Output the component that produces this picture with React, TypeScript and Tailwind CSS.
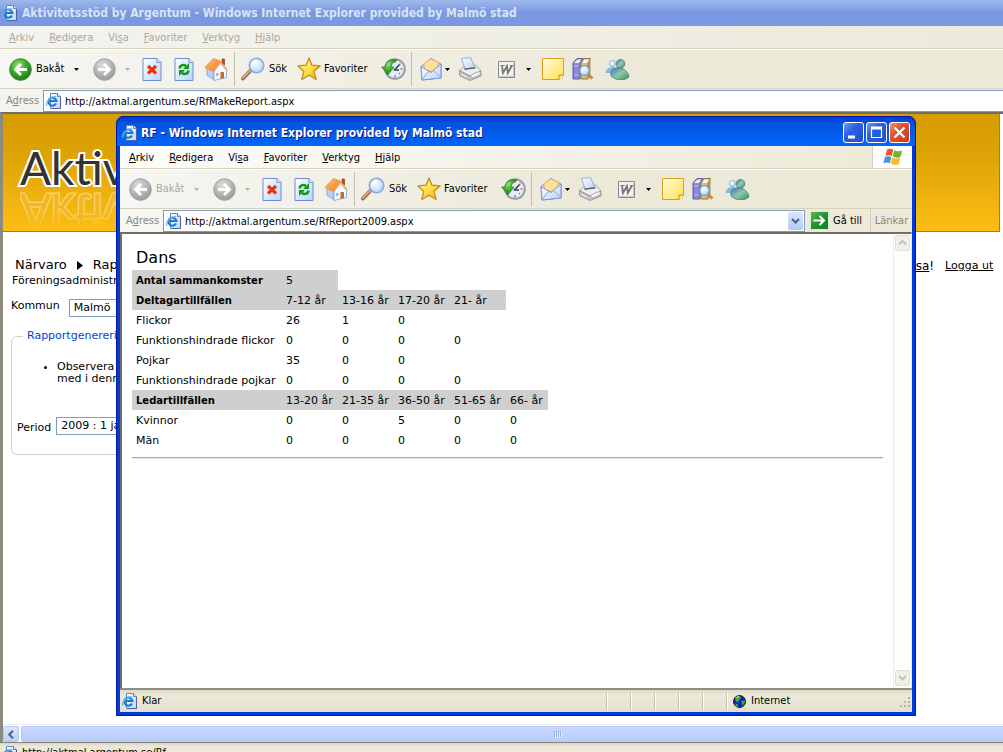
import type { ReactNode } from "react";

type Menu = { before: string; key: string; after: string };

const MENUS: Menu[] = [
	{ before: "", key: "A", after: "rkiv" },
	{ before: "", key: "R", after: "edigera" },
	{ before: "Vi", key: "s", after: "a" },
	{ before: "", key: "F", after: "avoriter" },
	{ before: "", key: "V", after: "erktyg" },
	{ before: "", key: "H", after: "jälp" },
];

type Row = { label: string; cells: string[]; header?: boolean };

const ROWS: Row[] = [
	{ label: "Antal sammankomster", cells: ["5"], header: true },
	{
		label: "Deltagartillfällen",
		cells: ["7-12 år", "13-16 år", "17-20 år", "21- år"],
		header: true,
	},
	{ label: "Flickor", cells: ["26", "1", "0"] },
	{ label: "Funktionshindrade flickor", cells: ["0", "0", "0", "0"] },
	{ label: "Pojkar", cells: ["35", "0", "0"] },
	{ label: "Funktionshindrade pojkar", cells: ["0", "0", "0", "0"] },
	{
		label: "Ledartillfällen",
		cells: ["13-20 år", "21-35 år", "36-50 år", "51-65 år", "66- år"],
		header: true,
	},
	{ label: "Kvinnor", cells: ["0", "0", "5", "0", "0"] },
	{ label: "Män", cells: ["0", "0", "0", "0", "0"] },
];

export default function App() {
	return (
		<main className="relative h-screen overflow-hidden bg-white font-['DejaVu_Sans_Condensed','DejaVu_Sans',sans-serif] text-[11px] leading-[14px] text-black">
			<IconDefs />
			<MainWindow />
			<ReportWindow />
		</main>
	);
}

function MainWindow() {
	return (
		<section className="flex h-[calc(100vh+14px)] w-[109%] flex-col bg-[#ece9d8]">
			<header className="flex h-[26px] shrink-0 items-center gap-1 bg-linear-to-b from-[#9db9eb] via-[#7a96df] to-[#7b99e3] pl-[2px] text-[#d8e4f8]">
				<PageIcon />
				<Title>Aktivitetsstöd by Argentum - Windows Internet Explorer provided by Malmö stad</Title>
			</header>
			<div className="flex h-[23px] shrink-0 border-b border-[#d8d2bd] bg-linear-to-r from-[#f3f3f0] to-[#ece9d8] text-[#aca899]">
				<MenuBar />
			</div>
			<Toolbar canGoBack />
			<div className="flex h-[23px] shrink-0 items-center bg-linear-to-r from-[#f3f3f0] to-[#ece9d8]">
				<AddressField id="main-url" url="http://aktmal.argentum.se/RfMakeReport.aspx" />
			</div>
			<div className="flex min-h-0 flex-1 flex-col border-t-2 border-l-3 border-t-[#716f64] border-l-[#8d8a7e] bg-white">
				<PageContent />
				<div className="mt-auto flex h-[18px] shrink-0 gap-[2px] border-t border-[#eeede5] pt-[1px]">
					<button
						aria-label="Bläddra åt vänster"
						className="grid w-[16px] place-items-center rounded-xs border border-[#b4c8f6] bg-linear-to-b from-[#dbe5fd] to-[#bcd0fb] text-[#4d6185]">
						<svg width="8" height="9" viewBox="0 0 8 9" fill="none" stroke="currentColor" strokeWidth="2">
							<path d="M6 .8 2.2 4.5 6 8.2" />
						</svg>
					</button>
					<div className="grid flex-1 place-items-center rounded-xs border border-[#b4c8f6] bg-linear-to-b from-[#c9d8fc] to-[#b9cdfa]">
						<div className="flex gap-[1px]">
							{[0, 1, 2, 3].map(i => (
								<span key={i} className="h-[6px] w-px bg-[#8cb0f8] shadow-[1px_1px_0_#eef4fe]" />
							))}
						</div>
					</div>
				</div>
			</div>
			<footer className="flex h-[24px] shrink-0 items-start gap-1 border-t border-[#8a887c] bg-linear-to-b from-[#d8d5c3] via-[#ece9d8] via-15% to-[#ece9d8] pt-[3px] pl-[2px]">
				<PageIcon />
				<span>http://aktmal.argentum.se/Rf</span>
			</footer>
		</section>
	);
}

function PageContent() {
	return (
		<div className="w-[calc(100%-91px)] font-['DejaVu_Sans',sans-serif]">
			<div className="h-[118px] w-[calc(100%-2px)] overflow-hidden border-r border-b border-[#8a7f60] bg-linear-to-b from-[#d69c00] via-[#dba205] via-30% to-[#fdbd14] pt-[32px] pl-[17px] font-['Lato',sans-serif] text-[46px] leading-[44px]">
				<h1 className="text-[#333] [paint-order:stroke_fill] [-webkit-text-stroke:4px_white]">
					Aktivitetsstöd
				</h1>
				<div
					aria-hidden="true"
					className="-mt-px -scale-y-100 mask-linear-0 mask-linear-from-40% mask-linear-to-100% text-[#f0b83a] opacity-70 [paint-order:stroke_fill] [-webkit-text-stroke:3px_#ffdf85]">
					Aktivitetsstöd
				</div>
			</div>
			<div className="flex items-end justify-between pt-[25px] pr-[9px] pl-[12px]">
				<nav className="flex items-center gap-[10px] text-[13px] leading-[16px]">
					<a href="#narvaro">Närvaro</a>
					<svg width="6" height="9" viewBox="0 0 6 9" aria-hidden="true">
						<path d="M0 0 6 4.500 0 9Z" fill="#000" />
					</svg>
					<a href="#rapporter">Rapporter</a>
				</nav>
				<div className="flex gap-[11px] text-[11px] leading-[14px]">
					<span className="text-[12px]">
						<a href="#profil" className="underline">
							Lisa
						</a>
						!
					</span>
					<a href="#logga-ut" className="underline">
						Logga ut
					</a>
				</div>
			</div>
			<p className="pt-px pl-[9px]">Föreningsadministratör</p>
			<div className="flex gap-[9px] pt-[11px] pl-[8px]">
				<label htmlFor="kommun">Kommun</label>
				<select
					id="kommun"
					className="h-[18px] w-[110px] appearance-none border border-[#7f9db9] bg-white px-[4px] leading-[16px]">
					<option>Malmö</option>
				</select>
			</div>
			<fieldset className="mt-[12px] ml-[8px] h-[126px] w-[600px] rounded-md border border-[#d0d0bf] px-[5px]">
				<legend className="ml-[6px] px-[4px] text-[#0046d5]">Rapportgenerering</legend>
				<ul className="list-disc pt-[18px] pl-[40px] leading-[12px]">
					<li className="w-[200px]">Observera att närvaro inte kommer med i denna rapport</li>
				</ul>
				<div className="flex items-end gap-[5px] pt-[32px]">
					<label htmlFor="period">Period</label>
					<select
						id="period"
						className="h-[18px] w-[140px] appearance-none border border-[#7f9db9] bg-white px-[4px] leading-[16px]">
						<option>2009 : 1 januari</option>
					</select>
				</div>
			</fieldset>
		</div>
	);
}

function ReportWindow() {
	return (
		<section className="absolute top-[116px] left-[116px] flex h-[600px] w-[800px] flex-col rounded-t-lg border-x-4 border-b-4 border-[#0138d8] bg-[#0138d8] outline-1 -outline-offset-1 outline-[#0019a8]">
			<header className="-mx-[3px] flex h-[30px] shrink-0 items-center gap-[3px] rounded-t-[7px] bg-linear-to-b from-[#0831d9] via-[#0453dd] via-25% to-[#0266fc] pt-[3px] pr-[5px] pl-[5px] text-white text-shadow-[1px_1px_0_#0a1883]">
				<PageIcon />
				<Title>RF - Windows Internet Explorer provided by Malmö stad</Title>
				<div className="ml-auto flex gap-[2px]">
					<CaptionButton label="Minimera">
						<path d="M5 15h7" strokeWidth="3" />
					</CaptionButton>
					<CaptionButton label="Maximera">
						<path d="M5 6h11M5.500 5v10.500h10V5" strokeWidth="1.200" />
						<path d="M5 6h11" strokeWidth="3" />
					</CaptionButton>
					<CaptionButton label="Stäng" close>
						<path d="m5.500 5.500 10 10m0-10-10 10" strokeWidth="2.300" />
					</CaptionButton>
				</div>
			</header>
			<div className="flex h-[23px] shrink-0 justify-between border-b border-[#d8d2bd] bg-linear-to-r from-[#fcfcfa] to-[#ece9d8]">
				<MenuBar />
				<div className="grid w-[40px] place-items-center border-l border-[#d8d2bd] bg-white">
					<WindowsFlag />
				</div>
			</div>
			<Toolbar />
			<div className="flex h-[23px] shrink-0 items-center bg-linear-to-r from-[#f6f6f3] to-[#ece9d8]">
				<AddressField id="report-url" url="http://aktmal.argentum.se/RfReport2009.aspx" dropdown />
				<button className="flex w-[65px] items-center gap-1 pl-[5px]">
					<svg width="19" height="19" viewBox="0 0 19 19" aria-hidden="true">
						<rect x=".5" y=".5" width="18" height="18" rx="1" fill="url(#go)" stroke="#d9efd5" />
						<path d="M3.500 9.500h10M9.500 5l4.500 4.500-4.500 4.500" fill="none" stroke="#fff" strokeWidth="2" />
					</svg>
					Gå till
				</button>
				<button className="h-full w-[42px] border-l border-[#d0cbb5] text-[#8a877a]">Länkar</button>
			</div>
			<div className="flex min-h-0 flex-1 border-t-2 border-r border-l-2 border-[#716f64] border-r-[#ece9d8] bg-white">
				<Report />
				<div className="flex w-[18px] shrink-0 flex-col justify-between border-l border-[#eeede5] bg-[#fdfdfa] pb-[1px]">
					<ScrollArrow label="Bläddra uppåt" d="M1 5.500 4.500 2 8 5.500" />
					<ScrollArrow label="Bläddra nedåt" d="M1 2 4.500 5.500 8 2" />
				</div>
			</div>
			<footer className="flex h-[24px] shrink-0 items-center gap-1 border-t-2 border-t-[#8f8d80] bg-linear-to-b from-[#dedbca] via-[#ece9d8] via-25% to-[#e3e0cf] pl-[2px]">
				<PageIcon />
				<span>Klar</span>
				<div className="ml-auto flex h-[17px]">
					{[0, 1, 2, 3, 4].map(i => (
						<span key={i} className="w-[24px] border-l border-[#c5c2b0] shadow-[inset_1px_0_0_#fff]" />
					))}
				</div>
				<div className="-ml-1 flex h-[17px] w-[186px] items-center gap-[5px] border-l border-[#c5c2b0] pl-[6px] shadow-[inset_1px_0_0_#fff]">
					<GlobeIcon />
					Internet
					<svg className="mt-1 ml-auto" width="12" height="12" viewBox="0 0 12 12" fill="#b8b4a2" aria-hidden="true">
						<path d="M8 0h2v2H8zM4 4h2v2H4zM8 4h2v2H8zM0 8h2v2H0zM4 8h2v2H4zM8 8h2v2H8z" />
					</svg>
				</div>
			</footer>
		</section>
	);
}

function Report() {
	return (
		<article className="flex-1 pt-[13px] pr-[10px] pl-[10px] font-['DejaVu_Sans',sans-serif]">
			<h2 className="pb-[2px] pl-1 text-[16px] leading-[21px]">Dans</h2>
			<table className="w-[416px] table-fixed border-collapse text-left">
				<colgroup>
					<col className="w-[150px]" />
					<col className="w-[56px]" />
					<col className="w-[56px]" />
					<col className="w-[56px]" />
					<col className="w-[56px]" />
					<col className="w-[42px]" />
				</colgroup>
				<tbody>
					{ROWS.map(row => (
						<tr key={row.label} className="h-[20px]">
							<th
								scope="row"
								className={
									"p-0 pt-[2px] pl-1 whitespace-nowrap " +
									(row.header ? "bg-[#cfcfcf] text-[10px] font-bold" : "font-normal")
								}>
								{row.label}
							</th>
							{row.cells.map((cell, i) => (
								<td
									key={i}
									className={
										"p-0 pt-[2px] pl-1 whitespace-nowrap " + (row.header ? "bg-[#cfcfcf]" : "")
									}>
									{cell}
								</td>
							))}
						</tr>
					))}
				</tbody>
			</table>
			<hr className="mt-[7px] border-t border-b border-t-[#aca899] border-b-[#ece9d8]" />
		</article>
	);
}

function Title({ children }: { children: ReactNode }) {
	return (
		<h1 className="font-['DejaVu_Sans_Condensed','DejaVu_Sans',sans-serif] text-[12px] font-bold whitespace-nowrap">
			{children}
		</h1>
	);
}

function MenuBar() {
	return (
		<nav className="flex items-center gap-[15px] pt-px pl-[9px]">
			{MENUS.map(m => (
				<button key={m.key + m.after}>
					{m.before}
					<u>{m.key}</u>
					{m.after}
				</button>
			))}
		</nav>
	);
}

function Toolbar({ canGoBack }: { canGoBack?: boolean }) {
	return (
		<div className="flex h-[40px] shrink-0 items-center border-t border-b border-t-white border-b-[#d8d2bd] bg-linear-to-r from-[#f6f6f3] to-[#ece9d8] to-60%">
			<button
				disabled={!canGoBack}
				className="flex w-[74px] items-center gap-1 pl-[9px] disabled:text-[#aca899]">
				<ArrowCircle active={canGoBack} />
				Bakåt
			</button>
			<Caret muted={!canGoBack} />
			<button disabled aria-label="Framåt" className="mr-[9px] ml-[13px]">
				<ArrowCircle forward />
			</button>
			<Caret muted />
			<div className="ml-[5px] flex">
				<ToolButton label="Stopp">
					<StopIcon />
				</ToolButton>
				<ToolButton label="Uppdatera">
					<RefreshIcon />
				</ToolButton>
				<ToolButton label="Startsida">
					<HomeIcon />
				</ToolButton>
			</div>
			<Separator />
			<button className="flex w-[56px] items-center gap-1 pl-1">
				<SearchIcon />
				Sök
			</button>
			<button className="flex w-[84px] items-center gap-[3px] pl-1">
				<StarIcon />
				Favoriter
			</button>
			<ToolButton label="Tidigare">
				<HistoryIcon />
			</ToolButton>
			<Separator />
			<button aria-label="E-post" className="ml-[6px] w-[25px]">
				<MailIcon />
			</button>
			<Caret />
			<button aria-label="Skriv ut" className="ml-[7px] w-[40px]">
				<PrintIcon />
			</button>
			<button aria-label="Redigera" className="w-[28px]">
				<WordIcon />
			</button>
			<Caret />
			<button aria-label="Diskutera" className="ml-[10px] w-[30px]">
				<NoteIcon />
			</button>
			<button aria-label="Referensmaterial" className="w-[33px]">
				<BooksIcon />
			</button>
			<button aria-label="Messenger" className="w-[28px]">
				<PeopleIcon />
			</button>
		</div>
	);
}

function ToolButton({ label, children }: { label: string; children: ReactNode }) {
	return (
		<button aria-label={label} className="grid w-[32px] shrink-0 place-items-center">
			{children}
		</button>
	);
}

function Separator() {
	return <span className="mx-[2px] h-[34px] w-px bg-[#c5c0a8]" />;
}

function Caret({ muted }: { muted?: boolean }) {
	return (
		<svg
			width="6"
			height="3"
			viewBox="0 0 6 3"
			className="shrink-0"
			fill={muted ? "#b5b2a3" : "#000"}
			aria-hidden="true">
			<path d="M0 0h5L2.500 3Z" />
		</svg>
	);
}

function AddressField({ id, url, dropdown }: { id: string; url: string; dropdown?: boolean }) {
	return (
		<>
			<label htmlFor={id} className="w-[43px] pt-px pl-[6px] text-[#8a877a]">
				A<u>d</u>ress
			</label>
			<div className="flex h-[22px] flex-1 items-center gap-[3px] border border-[#7f9db9] bg-white pl-[2px]">
				<PageIcon />
				<input id={id} defaultValue={url} className="min-w-0 flex-1 pt-[2px] outline-none" />
				{dropdown ?
					<button
						aria-label="Visa adresser"
						className="mr-px grid h-[18px] w-[15px] place-items-center rounded-xs bg-linear-to-b from-[#dbe5fd] to-[#b4c9f8] text-[#4d6185]">
						<svg width="9" height="6" viewBox="0 0 9 6" fill="none" stroke="currentColor" strokeWidth="2">
							<path d="M1 1l3.500 3.500L8 1" />
						</svg>
					</button>
				:	null}
			</div>
		</>
	);
}

function CaptionButton({ label, close, children }: { label: string; close?: boolean; children: ReactNode }) {
	return (
		<button aria-label={label}>
			<svg width="21" height="21" viewBox="0 0 21 21" fill="none" stroke="#fff">
				<rect
					x=".5"
					y=".5"
					width="20"
					height="20"
					rx="2.500"
					fill={close ? "url(#caption-red)" : "url(#caption-blue)"}
				/>
				{children}
			</svg>
		</button>
	);
}

function ScrollArrow({ label, d }: { label: string; d: string }) {
	return (
		<button
			aria-label={label}
			className="m-px grid h-[16px] w-[15px] place-items-center rounded-xs border border-[#e2e0d4] bg-[#f1f0e8] text-[#c5c2b6]">
			<svg width="9" height="8" viewBox="0 0 9 8" fill="none" stroke="currentColor" strokeWidth="2">
				<path d={d} />
			</svg>
		</button>
	);
}

/* Gradients shared by all the toolbar icons */
function IconDefs() {
	return (
		<svg width="0" height="0" className="absolute" aria-hidden="true">
			<defs>
				<radialGradient id="green" cx=".4" cy=".3" r=".7">
					<stop offset="0" stopColor="#9be07c" />
					<stop offset=".5" stopColor="#3fae2c" />
					<stop offset="1" stopColor="#1c7d12" />
				</radialGradient>
				<radialGradient id="grey" cx=".4" cy=".3" r=".7">
					<stop offset="0" stopColor="#dedede" />
					<stop offset=".6" stopColor="#b4b4b4" />
					<stop offset="1" stopColor="#9a9a9a" />
				</radialGradient>
				<linearGradient id="sheet" x1="0" y1="0" x2="1" y2="1">
					<stop offset="0" stopColor="#fff" />
					<stop offset="1" stopColor="#b9d3fa" />
				</linearGradient>
				<linearGradient id="gold" x1="0" y1="0" x2="1" y2="1">
					<stop offset="0" stopColor="#fffbb0" />
					<stop offset=".5" stopColor="#ffe04a" />
					<stop offset="1" stopColor="#f3ab12" />
				</linearGradient>
				<linearGradient id="note" x1="0" y1="0" x2="1" y2="1">
					<stop offset="0" stopColor="#fffde0" />
					<stop offset="1" stopColor="#ffe04e" />
				</linearGradient>
				<linearGradient id="roof" x1="0" y1="0" x2="1" y2="1">
					<stop offset="0" stopColor="#ffc36b" />
					<stop offset="1" stopColor="#ea7a22" />
				</linearGradient>
				<radialGradient id="lens" cx=".4" cy=".35" r=".7">
					<stop offset="0" stopColor="#fff" />
					<stop offset="1" stopColor="#a9d7fb" />
				</radialGradient>
				<linearGradient id="person" x1="0" y1="0" x2="1" y2="1">
					<stop offset="0" stopColor="#3f76b3" />
					<stop offset=".5" stopColor="#8cc7b0" />
					<stop offset="1" stopColor="#3f9440" />
				</linearGradient>
				<linearGradient id="caption-blue" x1="0" y1="0" x2="1" y2="1">
					<stop offset="0" stopColor="#7a9cf5" />
					<stop offset=".4" stopColor="#2a5fe0" />
					<stop offset="1" stopColor="#1c4fd0" />
				</linearGradient>
				<linearGradient id="caption-red" x1="0" y1="0" x2="1" y2="1">
					<stop offset="0" stopColor="#f09a7c" />
					<stop offset=".4" stopColor="#e2532c" />
					<stop offset="1" stopColor="#c43a12" />
				</linearGradient>
				<linearGradient id="go" x1="0" y1="0" x2="1" y2="1">
					<stop offset="0" stopColor="#5fbb5b" />
					<stop offset=".5" stopColor="#1f942b" />
					<stop offset="1" stopColor="#0f7f1c" />
				</linearGradient>
			</defs>
		</svg>
	);
}

function PageIcon() {
	return (
		<svg width="16" height="16" viewBox="0 0 16 16" className="shrink-0" aria-hidden="true">
			<path d="M4.500.5h7l3 3v12h-10z" fill="url(#sheet)" stroke="#6886b8" />
			<path d="M14.500 4v11.500H5" fill="none" stroke="#50609c" />
			<path d="M11.500.5v3h3" fill="#dbe7fb" stroke="#6886b8" />
			<path d="M10 10.600A4 4 0 1 1 10.400 8H3" fill="none" stroke="#1d78cf" strokeWidth="2.200" />
			<path d="M1 12.800C-.8 9.500 4 4 10 3.300" fill="none" stroke="#5db8f0" strokeWidth="1.300" />
		</svg>
	);
}

function ArrowCircle({ active, forward }: { active?: boolean; forward?: boolean }) {
	return (
		<svg width="23" height="23" viewBox="0 0 23 23" className="shrink-0" aria-hidden="true">
			<circle
				cx="11.500"
				cy="11.500"
				r="10.800"
				fill={active ? "url(#green)" : "url(#grey)"}
				stroke={active ? "#3a8a30" : "#a4a4a4"}
			/>
			<path
				d={forward ? "M5 11.500h11M11 6l5.500 5.500L11 17" : "M18 11.500H7M12 6l-5.500 5.500L12 17"}
				fill="none"
				stroke="#fff"
				strokeWidth="2.800"
			/>
		</svg>
	);
}

function StopIcon() {
	return (
		<svg width="20" height="23" viewBox="0 0 20 23" aria-hidden="true">
			<path d="M1 .5h14l4 4v18H1z" fill="url(#sheet)" stroke="#6b8fd0" />
			<path d="M15 .5v4h4" fill="#e4eefd" stroke="#6b8fd0" />
			<path d="m6 8 8 7.500M14 8l-8 7.500" stroke="#e8340c" strokeWidth="3.200" />
		</svg>
	);
}

function RefreshIcon() {
	return (
		<svg width="20" height="23" viewBox="0 0 20 23" aria-hidden="true">
			<path d="M1 .5h14l4 4v18H1z" fill="url(#sheet)" stroke="#6b8fd0" />
			<path d="M15 .5v4h4" fill="#e4eefd" stroke="#6b8fd0" />
			<path d="M5.500 10.500c.5-3.500 4-4.500 6.500-2.500M14.500 12.500c-.5 3.500-4 4.500-6.500 2.500" fill="none" stroke="#129a22" strokeWidth="2.600" />
			<path d="M15 5v6H9zM5 18v-6h6z" fill="#129a22" />
		</svg>
	);
}

function HomeIcon() {
	return (
		<svg width="24" height="24" viewBox="0 0 24 24" aria-hidden="true">
			<path d="M18 2h2.500v6l-2.500-2z" fill="#c2452a" stroke="#94331e" strokeWidth=".6" />
			<path d="M3 11 10 15v8l-7-4.500z" fill="#b9cdf5" stroke="#7792c8" strokeWidth=".7" />
			<path d="m10 14 6.500-8 6 7v7.500L10 23.500z" fill="#f5f9ff" stroke="#7da0d8" strokeWidth=".8" />
			<path d="M9.500 1.500 16.500 4 9.500 14.500.8 10.500z" fill="url(#roof)" stroke="#e59a4d" strokeWidth=".8" />
			<path d="m9.500 14.500 7-9.500 6.500 8" fill="none" stroke="#f0a25a" strokeWidth="1.600" />
			<path d="M16.500 15H20v6.200l-3.500.8z" fill="#b8722e" />
			<path d="M12 16h2.500v3H12z" fill="#8fbcf2" />
		</svg>
	);
}

function SearchIcon() {
	return (
		<svg width="24" height="24" viewBox="0 0 24 24" className="shrink-0" aria-hidden="true">
			<path d="m9.500 13.500-7.500 8" stroke="#9c6a4b" strokeWidth="3.800" strokeLinecap="round" />
			<path d="m9 13.500-7 7.500" stroke="#e3b890" strokeWidth="1.500" strokeLinecap="round" />
			<circle cx="15.500" cy="8.500" r="7.200" fill="url(#lens)" stroke="#8ea9de" strokeWidth="1.600" />
			<path d="M11 8c.5-2.500 2.500-4 5-4" fill="none" stroke="#fff" strokeWidth="1.500" />
		</svg>
	);
}

function StarIcon() {
	return (
		<svg width="24" height="24" viewBox="0 0 25 25" className="shrink-0" aria-hidden="true">
			<path
				d="m12.500 1 3 7.500 8.500.8-6.500 5.600 2.500 8.600-7.500-4.500L5 23.500l2-8.600L1 9.300l8.500-.8z"
				fill="url(#gold)"
				stroke="#c58a14"
				strokeWidth="1.300"
				strokeLinejoin="round"
			/>
		</svg>
	);
}

function HistoryIcon() {
	return (
		<svg width="25" height="24" viewBox="0 0 25 24" aria-hidden="true">
			<circle cx="14" cy="12" r="9.800" fill="#e1eefc" stroke="#9a9da6" strokeWidth="2" />
			<path d="M14 4v2M21.500 12h-2M14 18v2.500M19.500 6.500l-1 1M19 17l-1-1" stroke="#ef5b3a" strokeWidth="1.400" />
			<path d="m13 13.500 5.500-6M13 13h5" stroke="#34445a" strokeWidth="1.600" />
			<path
				d="M16 3C9 1 4.500 5 4 10H.8l6 8 6.200-8H10c.3-3 2.500-5.500 6-7z"
				fill="url(#green)"
				stroke="#26811d"
				strokeWidth=".8"
			/>
		</svg>
	);
}

function MailIcon() {
	return (
		<svg width="22" height="24" viewBox="0 0 22 24" aria-hidden="true">
			<path d="M1 9.500 11 1.500 21 7v14L2 23z" fill="#c7dcfa" stroke="#7c93d8" />
			<path d="m4 6.500 7-4.700 7.500 3.700-1 8.500H4.500z" fill="#ffe09a" stroke="#e5a94a" strokeWidth=".8" />
			<path d="m1 9.500 10 6L21 7v14L2 23z" fill="url(#sheet)" stroke="#7c93d8" />
			<path d="m2 22.500 7-8.500M21 20.500 13.500 13.500" stroke="#8ea6e2" />
		</svg>
	);
}

function PrintIcon() {
	return (
		<svg width="24" height="24" viewBox="0 0 24 24" aria-hidden="true">
			<path d="m1.500 13.500 4.500-4 12-1.500 5 6-11 5z" fill="#ededed" stroke="#9a9a9a" strokeWidth=".8" />
			<path d="m3.500 1.500 9-1 4.500 10-10 1.500z" fill="url(#sheet)" stroke="#77a0dc" strokeWidth=".8" />
			<path d="m1.500 13.500 10 5.500 11.500-5v5L12 23.500l-10.500-5z" fill="#c4c4c4" stroke="#8c8c8c" strokeWidth=".8" />
			<path d="m6.500 12.300 11-1.500" stroke="#666" strokeWidth="1.400" />
			<path d="m12 18.500 9-4 2 2.500-8 4z" fill="#f7f7f7" stroke="#909090" strokeWidth=".6" />
			<path d="m3.500 17.500 5 2.300" stroke="#fff" />
		</svg>
	);
}

function WordIcon() {
	return (
		<svg width="17" height="17" viewBox="0 0 17 17" aria-hidden="true">
			<path d="M.5.500h16v16H.5z" fill="#f3f3f3" stroke="#8a8a8a" />
			<path d="M2 15.500h13.500V2" fill="none" stroke="#c6c6c6" />
			<path d="m4 5 1 7L9 5l.8 7L14 4.500" fill="none" stroke="#777" strokeWidth="1.800" />
			<path d="M2.500 4.500h4M12 4.500h3" stroke="#777" />
		</svg>
	);
}

function NoteIcon() {
	return (
		<svg width="22" height="22" viewBox="0 0 22 22" aria-hidden="true">
			<path d="M.5.500h21V17l-4.500 4.500H.5z" fill="url(#note)" stroke="#dca019" />
			<path d="M17 21.500V17h4.500" fill="#ffedaa" stroke="#c68c10" />
		</svg>
	);
}

function BooksIcon() {
	return (
		<svg width="22" height="22" viewBox="0 0 22 22" aria-hidden="true">
			<path d="m1 5 4-4.500h6L8 5v16H1z" fill="#8b88d8" stroke="#5a57aa" />
			<path d="m2 5 3.500-3.500h4L7 5z" fill="#eeeef8" />
			<path d="M2.500 8h4M2.500 17h4" stroke="#c8c5f2" />
			<path d="m9 5 3-4.500h6.500L16 5v16H9z" fill="#dcc080" stroke="#8c764c" />
			<path d="m10 5 2.500-3.500h4.500L15 5z" fill="#f8f2e0" />
			<path d="M16 5 18.500.5v18L16 21z" fill="#b0935a" />
			<path d="m15.500 16 5 4.500" stroke="#c98a3b" strokeWidth="3" />
			<circle cx="12.500" cy="12.500" r="4.800" fill="url(#lens)" stroke="#6b9cd2" strokeWidth="1.200" />
		</svg>
	);
}

function PeopleIcon() {
	return (
		<svg width="25" height="21" viewBox="0 0 25 21" aria-hidden="true">
			<path d="M.5 14c1-4.500 4-6 8-6 2 1 3 3 3 6z" fill="#7cb7df" />
			<circle cx="7.500" cy="4.500" r="3" fill="url(#lens)" stroke="#6ca2cf" strokeWidth=".7" />
			<path d="M6 17c-1-5 2-8.500 8-8.500 6 1 9.500 5 10 9.500-5 4-13 4-18-1z" fill="url(#person)" stroke="#3a7d7c" strokeWidth=".7" />
			<circle cx="15.500" cy="4.800" r="4.300" fill="url(#person)" stroke="#356d80" strokeWidth=".7" />
		</svg>
	);
}

function WindowsFlag() {
	return (
		<svg width="20" height="18" viewBox="0 0 20 18" aria-hidden="true">
			<path d="M4 1.500c2-1.200 4-1 6.300.2L8.700 8C6.500 7 4.500 7 2.300 8z" fill="#e8582c" />
			<path d="M11.200 2.300c2.500 1.200 5 1.300 8 .2L17.500 9c-2.800 1-5.300.8-7.900-.5z" fill="#74b52c" />
			<path d="M2 9c2-1.200 4.300-1 6.400 0l-1.600 6.300c-2-1.200-4.300-1-6.500 0z" fill="#4a90dc" />
			<path d="M9.300 9.600c2.500 1.200 5 1.300 8 .2l-1.700 6.400c-2.700 1-5.300.8-7.900-.5z" fill="#f8bd26" />
		</svg>
	);
}

function GlobeIcon() {
	return (
		<svg width="13" height="13" viewBox="0 0 13 13" aria-hidden="true">
			<circle cx="6.500" cy="6.500" r="6" fill="#1020c8" stroke="#17281e" />
			<path d="M2 3c2-3 6-2.500 6-.5S6 4 5.500 6.500 2 6 2 3zM8.500 6l3.500-.5c0 3-1.500 4-3 5zM2 8.500l3 1L5 12c-2-.5-3-2-3-3.500z" fill="#36b036" />
			<path d="M3.500 2.500 6 1.500" stroke="#d6f2d6" />
		</svg>
	);
}
